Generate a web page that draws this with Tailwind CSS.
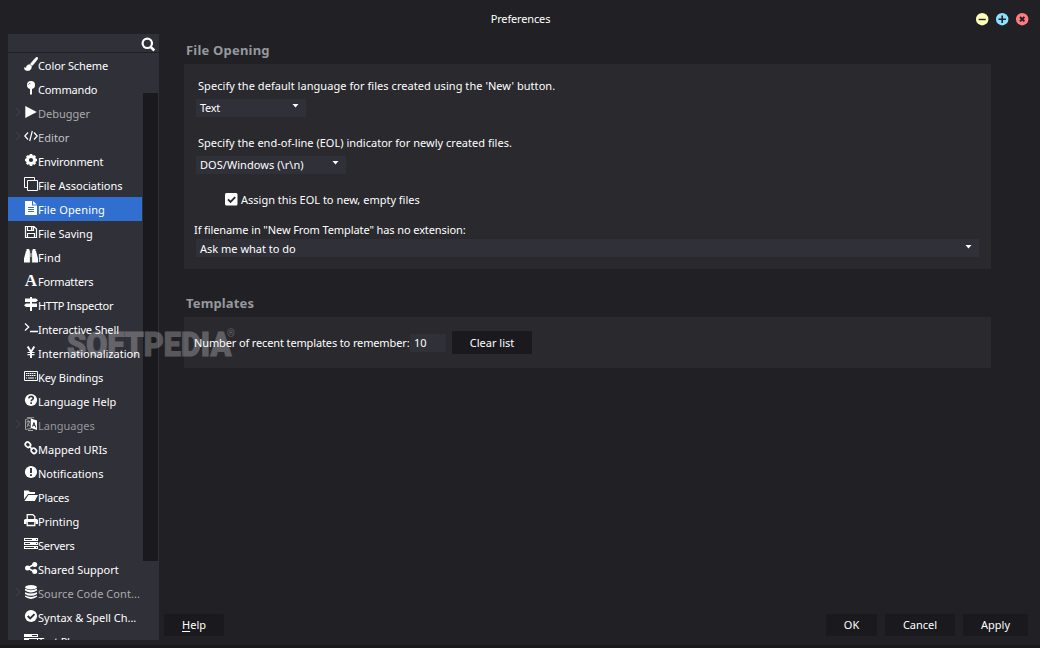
<!DOCTYPE html>
<html lang="en">

<head>
    <meta charset="UTF-8">
    <meta name="viewport" content="width=device-width, initial-scale=1.0">
    <title>Preferences</title>
    <script src="https://cdn.jsdelivr.net/npm/@tailwindcss/browser@4"></script>
</head>

<body class="bg-[#212125] text-white font-['Noto_Sans',sans-serif] text-[11px] leading-4">
    <div class="relative w-[1040px] h-[648px] flex flex-col overflow-hidden border-b-3 border-[#1a181d]">
        <!-- Title bar -->
        <header class="h-[34px] shrink-0 grid grid-cols-3 items-center pt-1 pr-[11px]">
            <h1 class="col-start-2 text-center pl-[12px] tracking-[-0.15px]">Preferences</h1>
            <div class="flex justify-end gap-[7px]">
                <svg class="size-[13px]" viewBox="0 0 13 13"><circle cx="6.2" cy="6.2" r="6.200" fill="#ffffb8"/><path d="M2.700 6.500h7" stroke="#212125" stroke-width="1.400"/></svg>
                <svg class="size-[13px]" viewBox="0 0 13 13"><circle cx="6.2" cy="6.2" r="6.200" fill="#8be1ff"/><path d="M2.500 6.200h7.400M6.200 2.500v7.400" stroke="#212125" stroke-width="1.600"/></svg>
                <svg class="size-[13px]" viewBox="0 0 13 13"><circle cx="6.2" cy="6.2" r="6.200" fill="#ff7b7f"/><path d="M4 4l4.400 4.400M8.400 4L4 8.400" stroke="#212125" stroke-width="1.900"/></svg>
            </div>
        </header>

        <div class="flex flex-1 min-h-0 pl-2">
            <!-- Category list -->
            <aside class="w-[151px] h-[606px] bg-[#303038] flex flex-col shrink-0 overflow-hidden">
                <div class="h-[19px] shrink-0 border-b border-[#212125] flex justify-end pr-[3px] pt-[2px]">
                    <svg class="size-4" viewBox="0 0 16 16" fill="none" stroke="#fff"><circle cx="7.3" cy="7.3" r="4.7" stroke-width="2.200"/><path d="M10.600 10.800l3.700 3.700" stroke-width="2.600"/></svg>
                </div>
                <div class="flex flex-1 min-h-0">
                    <ul class="w-[134px] shrink-0 whitespace-nowrap [&_span]:pt-0.5">
                        <li class="h-6 flex items-center pl-4">
                            <svg class="size-[14px] mb-[3px] shrink-0" viewBox="0 0 14 14" fill="#fff"><path d="M13.6.4c.6.6.3 1.3-.2 2L9 7.9C8.400 8.600 7.500 8.500 7 8s-.7-1.200 0-1.900L11.700.7c.6-.6 1.300-.8 1.900-.3zM5.800 7.400l1.700 1.600c.3 2.300-1 4.600-3.700 4.800C1.800 14 .5 12.800 0 10.500c1.300.8 2 .4 2.300-.5.4-1.400 1.600-2.600 3.500-2.600z" stroke="#fff" stroke-width=".4"/></svg>
                            <span class="tracking-[-0.1px]">Color Scheme</span>
                        </li>
                        <li class="h-6 flex items-center pl-4">
                            <svg class="size-[14px] mb-[3px] shrink-0" viewBox="0 0 14 14" fill="#fff"><circle cx="7" cy="4" r="4"/><path d="M6 7.500h2V13l-1 1-1-1z"/><path d="M4.600 3.800c.1-1 .8-1.600 1.800-1.700" stroke="#303038" stroke-width=".7" fill="none"/></svg>
                            <span class="tracking-[-0.15px]">Commando</span>
                        </li>
                        <li class="h-6 flex items-center pl-[7px] text-[#aaaaac]">
                            <svg class="w-[6px] h-2 mr-[3px] mb-[3px]" viewBox="0 0 6 8" fill="none" stroke="#44444b"><path d="M1 0l4 4-4 4"/></svg>
                            <svg class="size-[14px] mb-[3px] shrink-0" viewBox="0 0 14 14" fill="#fff"><path d="M1.300 1v12L12.800 7z"/></svg>
                            <span>Debugger</span>
                        </li>
                        <li class="h-6 flex items-center pl-[7px] text-[#c4c4c6]">
                            <svg class="w-[6px] h-2 mr-[3px] mb-[3px]" viewBox="0 0 6 8" fill="none" stroke="#44444b"><path d="M1 0l4 4-4 4"/></svg>
                            <svg class="size-[14px] mb-[3px] shrink-0" viewBox="0 0 14 14" fill="none" stroke="#fff" stroke-width="1.200"><path d="M4 3.500L.8 7 4 10.500M10 3.500L13.200 7 10 10.500M8.300 2L5.700 12"/></svg>
                            <span class="tracking-[0.1px]">Editor</span>
                        </li>
                        <li class="h-6 flex items-center pl-4">
                            <svg class="size-[14px] mb-[3px] shrink-0" viewBox="0 0 14 14"><circle cx="7" cy="7" r="3.600" fill="none" stroke="#fff" stroke-width="3"/><path d="M7 1v2.500M7 10.500V13M1 7h2.500M10.500 7H13M2.800 2.800l1.700 1.700M9.500 9.500l1.700 1.700M11.200 2.800L9.500 4.500M4.500 9.500l-1.700 1.700" stroke="#fff" stroke-width="2.600"/></svg>
                            <span class="tracking-[-0.1px]">Environment</span>
                        </li>
                        <li class="h-6 flex items-center pl-4">
                            <svg class="size-[14px] mb-[3px] shrink-0" viewBox="0 0 14 14" fill="none" stroke="#fff"><path d="M3.500 10.500h-3V.5h10v3M3.500 3.500h10v10h-10z"/></svg>
                            <span>File Associations</span>
                        </li>
                        <li class="h-6 flex items-center pl-4 bg-[#306fcf]">
                            <svg class="size-[14px] mb-[3px] shrink-0" viewBox="0 0 14 14"><path d="M1 0h7v4.500h5V14H1zM9 0l4 3.500H9z" fill="#fff"/><path d="M4 6.500h6M4 8.500h6M4 10.500h6" stroke="#306fcf"/></svg>
                            <span class="tracking-[0.15px]">File Opening</span>
                        </li>
                        <li class="h-6 flex items-center pl-4">
                            <svg class="size-[14px] mb-[3px] shrink-0" viewBox="0 0 14 14" fill="none" stroke="#fff"><path d="M1.500 1.500h8.500l2.500 2.500v8.500h-11zM3.500 12V8.500h7V12M3.500 2v3.500h6V2" stroke-width="1.200"/><path d="M7.700 2v3" stroke-width="1.500"/></svg>
                            <span>File Saving</span>
                        </li>
                        <li class="h-6 flex items-center pl-4">
                            <svg class="size-[14px] mb-[3px] shrink-0" viewBox="0 0 14 14" fill="#fff"><path d="M2.500 0h2.800v1.500h.9V13.500H0V9.500L2 2h.5zM11.500 0H8.700v1.500h-.9V13.500H14V9.500L12 2h-.5zM6 4h2v4H6z"/><path d="M6.300 2v12M7.700 2v12" stroke="#303038" stroke-width=".6"/></svg>
                            <span class="tracking-[0.2px]">Find</span>
                        </li>
                        <li class="h-6 flex items-center pl-4">
                            <span class="w-[14px] mb-[3px] text-center text-[17px] font-bold font-['Liberation_Serif',serif]">A</span>
                            <span class="tracking-[-0.2px]">Formatters</span>
                        </li>
                        <li class="h-6 flex items-center pl-4">
                            <svg class="size-[14px] mb-[3px] shrink-0" viewBox="0 0 14 14" fill="#fff"><path d="M6 0h2v14H6z"/><path d="M1 1.500h11L14 3.300 12 5H1zM13 6.500H2L0 8.200 2 10h11z"/></svg>
                            <span class="tracking-[-0.3px]">HTTP Inspector</span>
                        </li>
                        <li class="h-6 flex items-center pl-4">
                            <svg class="size-[14px] mb-[3px] shrink-0" viewBox="0 0 14 14" fill="none" stroke="#fff" stroke-width="1.300"><path d="M1 2.500L4.700 6 1 9.500M6 10.500h8"/></svg>
                            <span class="tracking-[-0.1px]">Interactive Shell</span>
                        </li>
                        <li class="h-6 flex items-center pl-4">
                            <svg class="size-[14px] mb-[3px] shrink-0" viewBox="0 0 14 14" fill="none" stroke="#fff"><path d="M3.700 1.500L7 7l3.300-5.500M7 7v6" stroke-width="1.900"/><path d="M3.500 7.500h7M3.500 9.700h7" stroke-width="1.200"/></svg>
                            <span>Internationalization</span>
                        </li>
                        <li class="h-6 flex items-center pl-4">
                            <svg class="size-[14px] mb-[3px] shrink-0" viewBox="0 0 14 14" fill="none" stroke="#fff"><path d="M.5 2.500h13v9H.5z"/><path d="M2 4.500h10M2 6.500h10" stroke-dasharray="1.500 .4"/><path d="M2 9h1M4 9h6M11 9h1"/></svg>
                            <span class="tracking-[-0.1px]">Key Bindings</span>
                        </li>
                        <li class="h-6 flex items-center pl-4">
                            <svg class="size-[14px] mb-[3px] shrink-0" viewBox="0 0 14 14"><circle cx="7" cy="7" r="6.100" fill="#fff"/><path d="M4.700 5.300C5 3.700 6 3.400 7 3.400c1.300 0 2.300.7 2.300 1.800C9.300 6.700 7.200 6.500 7.200 8.300M7.200 9.300v1.700" fill="none" stroke="#303038" stroke-width="1.600"/></svg>
                            <span>Language Help</span>
                        </li>
                        <li class="h-6 flex items-center pl-[7px] text-[#96969a]">
                            <svg class="w-[6px] h-2 mr-[3px] mb-[3px]" viewBox="0 0 6 8" fill="none" stroke="#44444b"><path d="M1 0l4 4-4 4"/></svg>
                            <svg class="size-[14px] mb-[3px] shrink-0" viewBox="0 0 14 14" fill="none"><path d="M1.500 2.500L7 1v10.500l-5.500 1z" stroke="#a0a0a3"/><path d="M7 1.500l6 2V13l-6-2z" fill="#fff"/><path d="M8.500 9.500L10 5.500l1.700 5M9 8.300h2" stroke="#303038"/><path d="M2.500 5L6 4.500M4.200 3v2M5.500 5L3 10M3 6.500L6 9.500M4 13.500h5" stroke="#b5b5b8" stroke-width=".9"/><path d="M3 .5h7" stroke="#8c8c90"/></svg>
                            <span>Languages</span>
                        </li>
                        <li class="h-6 flex items-center pl-4">
                            <svg class="size-[14px] mb-[3px] shrink-0" viewBox="0 0 14 14" fill="none" stroke="#fff" stroke-width="1.700"><rect x="1.200" y="1.500" width="5.500" height="4.500" rx="2.100" transform="rotate(45 4 3.700)"/><rect x="7" y="7.500" width="5.500" height="4.500" rx="2.100" transform="rotate(45 9.800 9.800)"/><path d="M5 5l3.500 3.500"/></svg>
                            <span>Mapped URIs</span>
                        </li>
                        <li class="h-6 flex items-center pl-4">
                            <svg class="size-[14px] mb-[3px] shrink-0" viewBox="0 0 14 14"><circle cx="7" cy="7" r="6.100" fill="#fff"/><path d="M7 3v5M7 9.200v1.800" stroke="#303038" stroke-width="1.900"/></svg>
                            <span>Notifications</span>
                        </li>
                        <li class="h-6 flex items-center pl-4">
                            <svg class="size-[14px] mb-[3px] shrink-0" viewBox="0 0 14 14" fill="#fff"><path d="M0 1.500h4.500L6 3h5v2H4L0 10.200z"/><path d="M4.400 6H14l-3.200 6H.5z"/></svg>
                            <span class="tracking-[-0.25px]">Places</span>
                        </li>
                        <li class="h-6 flex items-center pl-4">
                            <svg class="size-[14px] mb-[3px] shrink-0" viewBox="0 0 14 14"><path d="M3.200 6V1.600h5.600l2 2V6M3.200 9v3.500h7.600V9" fill="none" stroke="#fff" stroke-width="1.300"/><path d="M0 7.500Q0 6 1.500 6h11Q14 6 14 7.500V11h-2.500V9h-9v2H0z" fill="#fff"/></svg>
                            <span>Printing</span>
                        </li>
                        <li class="h-6 flex items-center pl-4">
                            <svg class="size-[14px] mb-[3px] shrink-0" viewBox="0 0 14 14"><path d="M0 1h14v3H0zM0 5h14v3H0zM0 9h14v3H0z" fill="#fff"/><path d="M1 2.500h7M12 2.500h1M1 6.500h5M12 6.500h1M1 10.500h9M12 10.500h1" stroke="#303038"/></svg>
                            <span class="tracking-[-0.25px]">Servers</span>
                        </li>
                        <li class="h-6 flex items-center pl-4">
                            <svg class="size-[14px] mb-[3px] shrink-0" viewBox="0 0 14 14" fill="#fff"><path d="M10.500 3.300L3.500 7l7 3.700" fill="none" stroke="#fff" stroke-width="1.600"/><circle cx="3.500" cy="7" r="2.500"/><circle cx="10.700" cy="3.400" r="2.500"/><circle cx="10.700" cy="10.600" r="2.500"/></svg>
                            <span>Shared Support</span>
                        </li>
                        <li class="h-6 flex items-center pl-[7px] text-[#aaaaac]">
                            <svg class="w-[6px] h-2 mr-[3px] mb-[3px]" viewBox="0 0 6 8" fill="none" stroke="#44444b"><path d="M1 0l4 4-4 4"/></svg>
                            <svg class="size-[14px] mb-[3px] shrink-0" viewBox="0 0 14 14" fill="#fff"><ellipse cx="7" cy="2.200" rx="6" ry="2.200"/><path d="M1 3.800q6 2.800 12 0v1.700q-6 3.800-12 0zM1 7.200q6 2.800 12 0v1.700q-6 3.800-12 0zM1 10.600q6 2.800 12 0v1.200q-6 4.200-12 0z"/></svg>
                            <span class="tracking-[0.06px]">Source Code Cont...</span>
                        </li>
                        <li class="h-6 flex items-center pl-4">
                            <svg class="size-[14px] mb-[3px] shrink-0" viewBox="0 0 14 14"><circle cx="7" cy="7" r="6.100" fill="#fff"/><path d="M3.700 7l2.500 2.500 4.300-4.400" fill="none" stroke="#303038" stroke-width="1.900"/></svg>
                            <span>Syntax &amp; Spell Ch...</span>
                        </li>
                        <li class="h-6 flex items-center pl-4">
                            <svg class="size-[14px] mb-[3px] shrink-0" viewBox="0 0 14 14"><path d="M0 1h14v3H0zM0 5h14v3H0zM0 9h14v3H0z" fill="#fff"/><path d="M8 2.500h5M5 6.500h8" stroke="#303038"/></svg>
                            <span class="tracking-[-0.2px]">Test Plans</span>
                        </li>
                    </ul>
                    <div class="ml-px mt-10 w-[15px] h-[468px] bg-[#1a1a1e]"></div>
                </div>
            </aside>

            <!-- Settings pane -->
            <main class="flex-1 flex flex-col pl-[5px] pr-3">
                <section class="ml-5 w-[807px]">
                    <h2 class="h-[30px] pl-[2px] pt-2 text-[13px] font-bold text-[#96989d] tracking-[0.2px]">File Opening</h2>
                    <div class="h-[205px] bg-[#29292e] pl-[10px] pt-[14px]">
                        <p class="pl-1 tracking-[0.05px]">Specify the default language for files created using the 'New' button.</p>
                        <div class="ml-[2px] mt-[5px] w-[110px] h-[18px] bg-[#303038] flex items-center justify-between pl-1 pr-[7px]">
                            <span class="tracking-[-0.3px]">Text</span>
                            <svg class="w-[7px] h-1 mb-1" viewBox="0 0 7 4" fill="#fff"><path d="M.5 0h6L3.500 3.600z"/></svg>
                        </div>
                        <p class="mt-[18px] pl-1 tracking-[0.015px]">Specify the end-of-line (EOL) indicator for newly created files.</p>
                        <div class="ml-[2px] mt-[5px] w-[150px] h-[18px] bg-[#303038] flex items-center justify-between pl-1 pr-[7px]">
                            <span class="tracking-[0.05px]">DOS/Windows (\r\n)</span>
                            <svg class="w-[7px] h-1 mb-1" viewBox="0 0 7 4" fill="#fff"><path d="M.5 0h6L3.500 3.600z"/></svg>
                        </div>
                        <label class="mt-[18px] ml-[31px] flex items-center gap-[3px]">
                            <svg class="size-[13px] mb-px" viewBox="0 0 13 13"><rect width="12.500" height="12.500" rx="1.500" fill="#fff"/><path d="M3 6.300l2.500 2.500 4.700-4.700" fill="none" stroke="#29292e" stroke-width="1.900"/></svg>
                            <span>Assign this EOL to new, empty files</span>
                        </label>
                        <p class="mt-[14px] tracking-[-0.1px]">If filename in "New From Template" has no extension:</p>
                        <div class="ml-[2px] mt-px w-[783px] h-[18px] bg-[#303038] flex items-center justify-between pl-1 pr-[7px]">
                            <span class="pt-0.5">Ask me what to do</span>
                            <svg class="w-[7px] h-1 mb-0.5" viewBox="0 0 7 4" fill="#fff"><path d="M.5 0h6L3.500 3.600z"/></svg>
                        </div>
                    </div>
                </section>
                <section class="ml-5 w-[807px] mt-[18px]">
                    <h2 class="h-[30px] pl-[2px] pt-2 text-[13px] font-bold text-[#96989d] tracking-[0.15px]">Templates</h2>
                    <div class="h-[51px] bg-[#29292e] flex items-center pl-[10px]">
                        <span class="w-[216px] whitespace-nowrap tracking-[-0.13px]">Number of recent templates to remember:</span>
                        <span class="w-[36px] h-[18px] bg-[#303038] pl-1 pt-px">10</span>
                        <button class="ml-[6px] w-20 h-[23px] rounded-[1px] bg-[#1a1a1e]">Clear list</button>
                    </div>
                </section>
                <div class="mt-[246px] flex">
                    <button class="w-[60px] h-[22px] rounded-[1px] bg-[#1a1a1e]"><span class="underline underline-offset-2">H</span>elp</button>
                    <button class="ml-auto w-[51px] h-[22px] rounded-[1px] bg-[#1a1a1e]">OK</button>
                    <button class="ml-2 w-[70px] h-[22px] rounded-[1px] bg-[#1a1a1e]">Cancel</button>
                    <button class="ml-2 w-[65px] h-[22px] rounded-[1px] bg-[#1a1a1e]">Apply</button>
                </div>
            </main>
        </div>

        <!-- Watermark -->
        <div class="absolute left-[67px] top-[328px] flex items-start text-white opacity-25 font-['Roboto',sans-serif] pointer-events-none">
            <span class="text-[33px] leading-[34px] font-black w-[163px] whitespace-nowrap origin-left scale-x-[0.93] [-webkit-text-stroke:1px_white]">SOFTPEDIA</span>
            <span class="text-[10px] leading-3 -ml-[3px]">®</span>
        </div>
    </div>
</body>

</html>
